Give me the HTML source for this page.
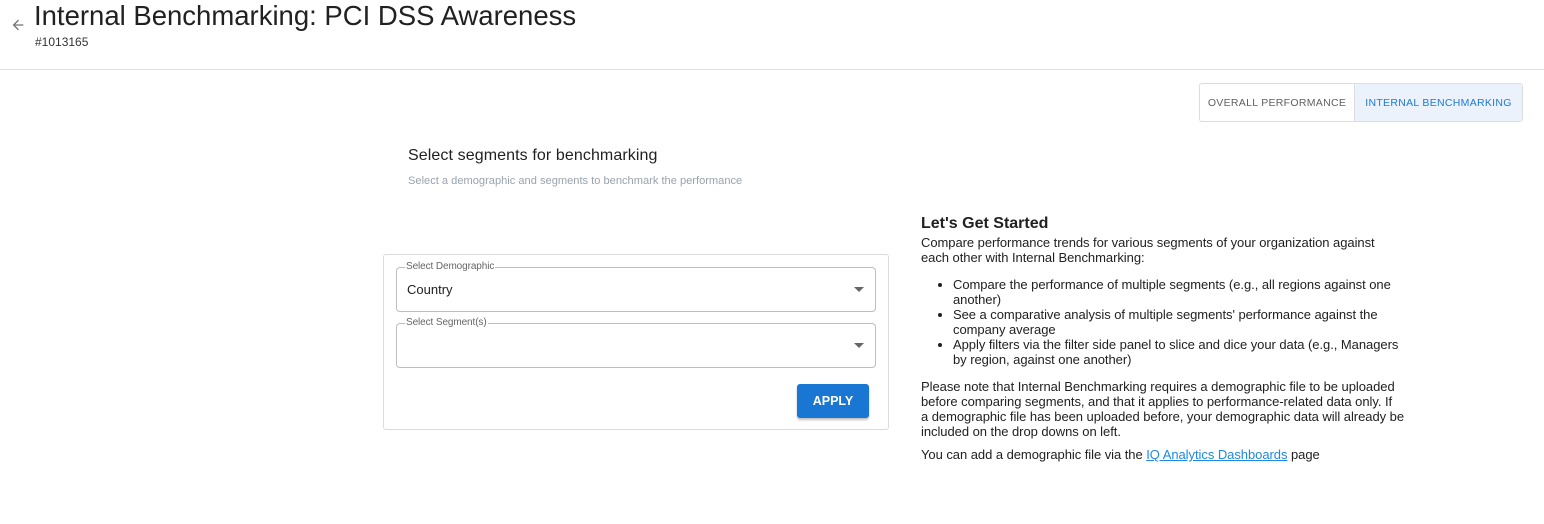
<!DOCTYPE html>
<html><head><meta charset="utf-8"><style>
body{margin:0;width:1544px;height:524px;background:#fff;font-family:"Liberation Sans",Arial,sans-serif;position:relative;overflow:hidden;color:#212121}
.a{position:absolute;white-space:nowrap}
.hdr{position:absolute;left:0;top:69px;width:1544px;height:1px;background:#e0e0e0}
.tabs{position:absolute;left:1199px;top:83px;width:322px;height:37px;border:1px solid #dadde2;border-radius:3px;display:flex;font-size:10.5px;letter-spacing:.3px}
.tabs div{display:flex;align-items:center;justify-content:center}
.card{position:absolute;left:383px;top:254px;width:504px;height:174px;border:1px solid #dcdcdc;border-radius:3px}
.fld{position:absolute;left:396px;width:478px;height:43px;border:1px solid #bdbdbd;border-radius:4px}
.lbl{position:absolute;left:8px;top:-7px;background:#fff;padding:0 1px;font-size:10px;color:#666;letter-spacing:-.1px}
.car{position:absolute;right:11px;top:19px;width:0;height:0;border-left:5px solid transparent;border-right:5px solid transparent;border-top:5px solid #666}
.rt{position:absolute;left:921px;font-size:13px;line-height:15px;color:#212121;letter-spacing:-.05px;white-space:nowrap}
ul{margin:0;padding-left:32px}
a{color:#1e88e5;text-decoration:underline}
</style></head><body>
<svg class="a" style="left:10px;top:17px" width="16" height="16" viewBox="0 0 24 24"><path d="M20 11H7.8l5.6-5.6L12 4l-8 8 8 8 1.4-1.4L7.8 13H20z" fill="#757575"/></svg>
<div class="a" style="left:34px;top:0px;font-size:27.5px;color:#212121">Internal Benchmarking: PCI DSS Awareness</div>
<div class="a" style="left:35px;top:35px;font-size:12px;color:#333">#1013165</div>
<div class="hdr"></div>
<div class="tabs"><div style="width:154px;color:#616161;border-right:1px solid #dadde2">OVERALL PERFORMANCE</div><div style="flex:1;background:#ebf2fb;color:#1e7ad6">INTERNAL BENCHMARKING</div></div>
<div class="a" style="left:408px;top:147px;font-size:16px;color:#212121;letter-spacing:.1px">Select segments for benchmarking</div>
<div class="a" style="left:408px;top:175px;font-size:11.1px;color:#9aa3ad">Select a demographic and segments to benchmark the performance</div>
<div class="card"></div>
<div class="fld" style="top:267px"><span class="lbl">Select Demographic</span><span class="a" style="left:10px;top:14px;font-size:13px">Country</span><span class="car"></span></div>
<div class="fld" style="top:323px"><span class="lbl">Select Segment(s)</span><span class="car"></span></div>
<div class="a" style="left:797px;top:384px;width:72px;height:34px;background:#1976d2;border-radius:3px;box-shadow:0 2px 2px rgba(0,0,0,.25);color:#fff;font-weight:bold;font-size:12.5px;display:flex;align-items:center;justify-content:center">APPLY</div>
<div class="a" style="left:921px;top:215px;font-size:16px;font-weight:bold;color:#212121">Let's Get Started</div>
<div class="rt" style="top:235px">Compare performance trends for various segments of your organization against<br>each other with Internal Benchmarking:</div>
<div class="rt" style="top:277px;left:921px"><ul>
<li>Compare the performance of multiple segments (e.g., all regions against one<br>another)</li>
<li>See a comparative analysis of multiple segments' performance against the<br>company average</li>
<li>Apply filters via the filter side panel to slice and dice your data (e.g., Managers<br>by region, against one another)</li></ul></div>
<div class="rt" style="top:379px">Please note that Internal Benchmarking requires a demographic file to be uploaded<br>before comparing segments, and that it applies to performance-related data only. If<br>a demographic file has been uploaded before, your demographic data will already be<br>included on the drop downs on left.</div>
<div class="rt" style="top:447px">You can add a demographic file via the <a>IQ Analytics Dashboards</a> page</div>
</body></html>
